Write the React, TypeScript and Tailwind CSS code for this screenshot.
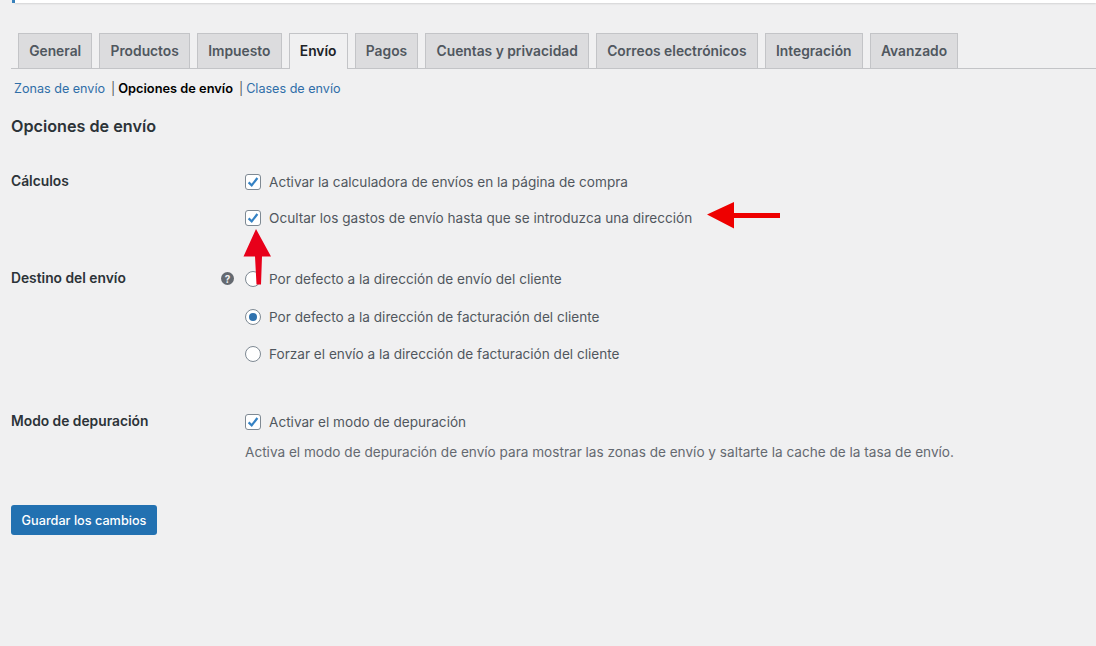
import React from "react";

const tabs = ["General", "Productos", "Impuesto", "Envío", "Pagos", "Cuentas y privacidad", "Correos electrónicos", "Integración", "Avanzado"];

function Check() {
  return (
    <span className="flex h-4 w-4 shrink-0 items-center justify-center rounded-[3px] border border-[#7e8993] bg-white">
      <svg width="14" height="14" viewBox="0 0 14 14" fill="none">
        <path d="M2.6 7.4 L5.7 10.4 L11.4 3" stroke="#3582c4" strokeWidth="2.2" />
      </svg>
    </span>
  );
}

function Radio({ on }: { on?: boolean }) {
  return (
    <span className="flex h-4 w-4 shrink-0 items-center justify-center rounded-full border border-[#7e8993] bg-white">
      {on && <span className="h-2 w-2 rounded-full bg-[#2f72ae]" />}
    </span>
  );
}

function Option({ control, label }: { control: React.ReactNode; label: string }) {
  return (
    <div className="flex h-5 items-center gap-2">
      {control}
      <span className="text-[13.6px] text-[#50575e]">{label}</span>
    </div>
  );
}

export default function App() {
  return (
    <div className="relative h-[646px] w-[1096px] overflow-hidden bg-[#f0f0f1] font-['Inter','Liberation_Sans',sans-serif] antialiased">
      <div className="ml-3 flex h-[3px]">
        <div className="w-[3px] bg-[#3a83bd]" />
        <div className="flex-1 bg-white shadow-[0_1px_2px_rgba(0,0,0,0.12)]" />
      </div>

      <div className="ml-[11px] mt-[30px] flex h-9 items-end gap-[7px] border-b border-[#c3c4c7] pl-[7px]">
        {tabs.map((t) => (
          <div
            key={t}
            className={
              t === "Envío"
                ? "-mb-px flex h-9 items-center border border-b-0 border-[#c3c4c7] bg-[#f0f0f1] px-[10.2px] text-[13.8px] font-semibold text-[#1d2327]"
                : "flex h-[35px] items-center border border-b-0 border-[#c3c4c7] bg-[#dcdcde] px-[10.2px] text-[13.8px] font-semibold text-[#50575e]"
            }
          >
            {t}
          </div>
        ))}
      </div>

      <div className="ml-[14px] mt-[10px] flex h-5 items-center text-[12.6px]">
        <span className="text-[#2f6ea8]">Zonas de envío</span>
        <span className="ml-[6px] mr-[3px] text-[#50575e]">|</span>
        <span className="text-[12.8px] font-semibold text-black">Opciones de envío</span>
        <span className="ml-[6px] mr-[3px] text-[#50575e]">|</span>
        <span className="text-[#2f6ea8]">Clases de envío</span>
      </div>

      <h2 className="ml-[11px] mt-[17px] h-5 text-[16.2px] leading-5 font-semibold text-[#2c3338]">Opciones de envío</h2>

      <div className="ml-[11px] mt-[35px] flex">
        <div className="w-[234px] text-[13.8px] leading-5 font-semibold text-[#2c3338]">Cálculos</div>
        <div className="flex flex-col gap-[16px] pt-px">
          <Option control={<Check />} label="Activar la calculadora de envíos en la página de compra" />
          <Option control={<Check />} label="Ocultar los gastos de envío hasta que se introduzca una dirección" />
        </div>
      </div>

      <div className="ml-[11px] mt-[40px] flex">
        <div className="flex w-[234px] justify-between pr-[11px] text-[13.8px] leading-5 font-semibold text-[#2c3338]">
          <span>Destino del envío</span>
          <span className="mt-[4px] flex h-[13px] w-[13px] items-center justify-center rounded-full bg-[#646970] text-[10px] leading-none font-bold text-[#f0f0f1]">?</span>
        </div>
        <div className="flex flex-col gap-[18px] pt-px">
          <Option control={<Radio />} label="Por defecto a la dirección de envío del cliente" />
          <Option control={<Radio on />} label="Por defecto a la dirección de facturación del cliente" />
          <div className="-mt-px">
            <Option control={<Radio />} label="Forzar el envío a la dirección de facturación del cliente" />
          </div>
        </div>
      </div>

      <div className="ml-[11px] mt-[47px] flex">
        <div className="w-[234px] text-[13.8px] leading-5 font-semibold text-[#2c3338]">Modo de depuración</div>
        <div className="flex flex-col gap-[10px] pt-px">
          <Option control={<Check />} label="Activar el modo de depuración" />
          <p className="text-[13.6px] leading-5 text-[#646970]">Activa el modo de depuración de envío para mostrar las zonas de envío y saltarte la cache de la tasa de envío.</p>
        </div>
      </div>

      <div className="ml-[11px] mt-[43px] flex h-[30px] w-[146px] items-center justify-center rounded-[3px] bg-[#2271b1] pt-px text-[12.7px] font-medium text-white">
        Guardar los cambios
      </div>

      <svg className="absolute left-[700px] top-[195px]" width="90" height="40" viewBox="0 0 90 40">
        <path d="M7 19.5 L34 7 L34 18 L80 18 L80 23 L34 23 L34 33.5 Z" fill="#ee0000" />
      </svg>
      <svg className="absolute left-[240px] top-[225px]" width="36" height="65" viewBox="0 0 36 65">
        <path d="M16 4 L31 31.5 L22 31.5 L21 59.5 L16.5 59.5 L15 31.5 L3.5 31.5 Z" fill="#e8001a" />
      </svg>
    </div>
  );
}
